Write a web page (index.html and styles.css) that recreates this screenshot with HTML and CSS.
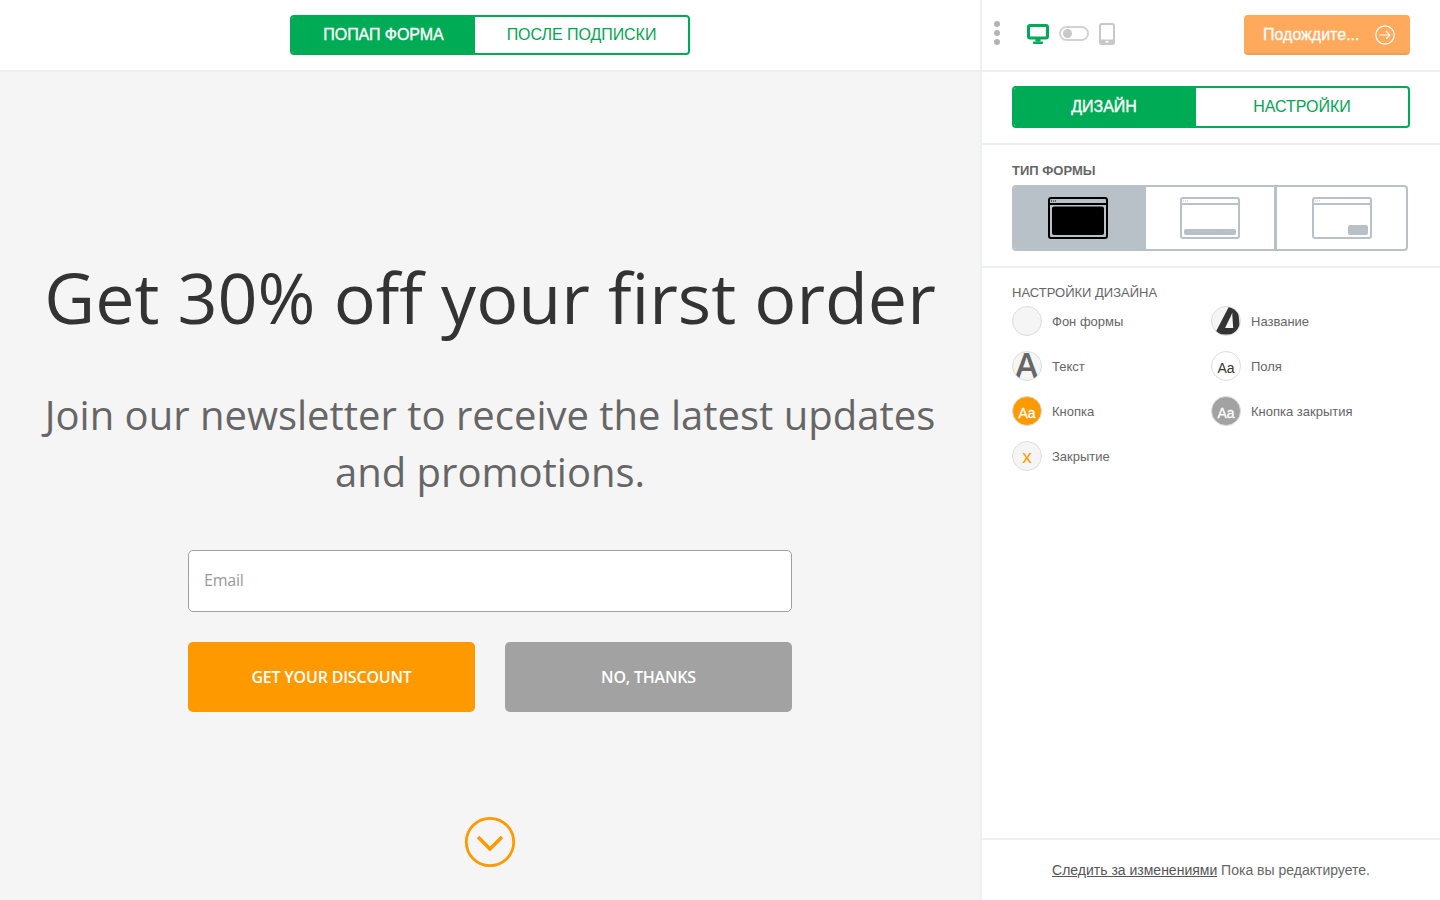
FILE: index.html
```html
<!DOCTYPE html>
<html lang="ru">
<head>
<meta charset="utf-8">
<title>Редактор формы</title>
<link rel="stylesheet" href="styles.css">
</head>
<body>
<div class="app">
  <main class="main">
    <header class="topbar">
      <div class="seg seg-top">
        <span class="seg-item seg-on seg-top-a">ПОПАП ФОРМА</span>
        <span class="seg-item seg-top-b">ПОСЛЕ ПОДПИСКИ</span>
      </div>
    </header>
    <section class="canvas">
      <h1 class="headline">Get 30% off your first order</h1>
      <p class="subline">Join our newsletter to receive the latest updates and promotions.</p>
      <div class="email">Email</div>
      <div class="actions">
        <div class="cta cta-go">GET YOUR DISCOUNT</div>
        <div class="cta cta-no">NO, THANKS</div>
      </div>
      <svg class="down" width="52" height="52" viewBox="0 0 52 52" aria-hidden="true">
        <circle cx="26" cy="26" r="23.700" fill="none" stroke="#ff9900" stroke-width="2.8"/>
        <path d="M14 21 26 33 38 21" fill="none" stroke="#ff9900" stroke-width="3.6"/>
      </svg>
    </section>
  </main>
  <aside class="side">
    <div class="side-top">
      <div class="dots"><i></i><i></i><i></i></div>
      <svg class="ico-desk" width="22" height="20" viewBox="0 0 22 20" aria-hidden="true">
        <rect x="1.500" y="1.500" width="19" height="12.500" rx="1.500" fill="none" stroke="#00ab55" stroke-width="3"/>
        <rect x="8.500" y="14" width="5" height="3.500" fill="#00ab55"/>
        <rect x="6" y="17.500" width="10" height="2.500" rx="1" fill="#00ab55"/>
      </svg>
      <div class="toggle"><i></i></div>
      <svg class="ico-tab" width="16" height="22" viewBox="0 0 16 22" aria-hidden="true">
        <rect x="1" y="1" width="14" height="20" rx="2" fill="none" stroke="#c8c8c8" stroke-width="2"/>
        <rect x="1" y="16.500" width="14" height="4.500" fill="#c8c8c8"/>
        <rect x="6.500" y="18" width="3" height="1.600" fill="#fff"/>
      </svg>
      <div class="wait">
        <span>Подождите...</span>
        <svg width="20" height="20" viewBox="0 0 20 20" aria-hidden="true">
          <circle cx="10" cy="10" r="9.200" fill="none" stroke="#fff" stroke-width="1.200"/>
          <path d="M4.500 10H15M11 6l4 4-4 4" fill="none" stroke="#fff" stroke-width="1.100"/>
        </svg>
      </div>
    </div>
    <div class="side-tabs">
      <div class="seg seg-side">
        <span class="seg-item seg-on seg-side-a">ДИЗАЙН</span>
        <span class="seg-item seg-side-b">НАСТРОЙКИ</span>
      </div>
    </div>
    <div class="side-type">
      <div class="type-title">ТИП ФОРМЫ</div>
      <div class="types">
        <div class="type type-on">
          <svg width="60" height="42" viewBox="0 0 60 42" aria-hidden="true">
            <rect x="1" y="1" width="58" height="40" rx="2" fill="none" stroke="#000" stroke-width="2"/>
            <rect x="1" y="6" width="58" height="2" fill="#000"/>
            <rect x="3" y="3.500" width="1" height="1" fill="#000"/><rect x="5" y="3.500" width="1" height="1" fill="#000"/><rect x="7" y="3.500" width="1" height="1" fill="#000"/>
            <rect x="4" y="9.500" width="52" height="28.500" rx="2" fill="#000"/>
          </svg>
        </div>
        <div class="type type-mid">
          <svg width="60" height="42" viewBox="0 0 60 42" aria-hidden="true">
            <rect x="1" y="1" width="58" height="40" rx="2" fill="none" stroke="#b9c1c8" stroke-width="2"/>
            <rect x="1" y="6" width="58" height="2" fill="#b9c1c8"/>
            <rect x="3" y="3.500" width="1" height="1" fill="#b9c1c8"/><rect x="5" y="3.500" width="1" height="1" fill="#b9c1c8"/><rect x="7" y="3.500" width="1" height="1" fill="#b9c1c8"/>
            <rect x="4" y="32" width="52" height="6" rx="2" fill="#b9c1c8"/>
          </svg>
        </div>
        <div class="type type-last">
          <svg width="60" height="42" viewBox="0 0 60 42" aria-hidden="true">
            <rect x="1" y="1" width="58" height="40" rx="2" fill="none" stroke="#b9c1c8" stroke-width="2"/>
            <rect x="1" y="6" width="58" height="2" fill="#b9c1c8"/>
            <rect x="3" y="3.500" width="1" height="1" fill="#b9c1c8"/><rect x="5" y="3.500" width="1" height="1" fill="#b9c1c8"/><rect x="7" y="3.500" width="1" height="1" fill="#b9c1c8"/>
            <rect x="36" y="28" width="20" height="10" rx="2" fill="#b9c1c8"/>
          </svg>
        </div>
      </div>
    </div>
    <div class="side-design">
      <div class="design-title">НАСТРОЙКИ ДИЗАЙНА</div>
      <div class="swatches">
        <div class="sw"><span class="dot dot-bg"></span><span>Фон формы</span></div>
        <div class="sw"><span class="dot dot-bg"><b class="big big-title">A</b></span><span>Название</span></div>
        <div class="sw"><span class="dot dot-bg"><b class="big big-text">A</b></span><span>Текст</span></div>
        <div class="sw"><span class="dot dot-field">Aa</span><span>Поля</span></div>
        <div class="sw"><span class="dot dot-btn">Aa</span><span>Кнопка</span></div>
        <div class="sw"><span class="dot dot-close">Aa</span><span>Кнопка закрытия</span></div>
        <div class="sw"><span class="dot dot-bg dot-x">x</span><span>Закрытие</span></div>
      </div>
    </div>
    <footer class="side-foot"><a class="foot-link">Следить за изменениями</a> Пока вы редактируете.</footer>
  </aside>
</div>
</body>
</html>
```

FILE: styles.css
```css
* { box-sizing: border-box; }
html, body { margin: 0; padding: 0; height: 100%; overflow: hidden; background: #fff; }
body { font-family: "Liberation Sans", Arial, sans-serif; color: #666; }
.app { display: flex; width: 1440px; height: 900px; }

.main { width: 982px; height: 900px; border-right: 2px solid #eceff3; display: flex; flex-direction: column; flex: none; }
.topbar { height: 72px; flex: none; border-bottom: 2px solid #eceff3; display: flex; justify-content: center; padding-top: 15px; }
.seg { display: flex; border: 2px solid #00ab55; border-radius: 4px; overflow: hidden; background: #fff; }
.seg-item { display: flex; align-items: center; justify-content: center; color: #00a651; font-size: 16px; letter-spacing: -0.05px; }
.seg-on { background: #00ab55; color: #fff; -webkit-text-stroke: 0.35px #fff; }
.seg-top { width: 400px; height: 40px; }
.seg-top-a { width: 183px; }
.seg-top-b { flex: 1; }
.seg-side { width: 398px; height: 42px; }
.seg-side-a { width: 182px; padding-right: 2px; }
.seg-side-b { flex: 1; }

.canvas { flex: 1; background: #f5f5f5; display: flex; flex-direction: column; align-items: center; }
.headline { margin: 183px 0 0; font: 400 70px/85px "Open Sans", sans-serif; color: #333; white-space: nowrap; }
.subline { margin: 46px 0 0; width: 960px; text-align: center; font: 400 40px/57px "Open Sans", sans-serif; color: #666; }
.email { margin-top: 50px; width: 604px; height: 62px; background: #fff; border: 1px solid #a0a0a0; border-radius: 5px; padding: 0 0 2px 15px; display: flex; align-items: center; font: 400 16px "Open Sans", sans-serif; color: #999; letter-spacing: -0.2px; }
.actions { margin-top: 30px; display: flex; gap: 30px; }
.cta { width: 287px; height: 70px; border-radius: 5px; display: flex; align-items: center; justify-content: center; color: #fff; font: 600 16px "Open Sans", sans-serif; letter-spacing: -0.2px; }
.cta-go { background: #ff9900; }
.cta-no { background: #a2a2a2; }
.down { margin-top: 104px; }

.side { flex: 1; display: flex; flex-direction: column; height: 900px; }
.side-top { height: 72px; flex: none; border-bottom: 2px solid #eceff3; display: flex; align-items: flex-start; padding: 0 30px 0 12px; }
.dots { display: flex; flex-direction: column; gap: 3px; margin-top: 21px; }
.dots i { width: 6px; height: 6px; border-radius: 50%; background: #b4b4b4; display: block; }
.ico-desk { margin: 24px 0 0 27px; }
.toggle { width: 30px; height: 15px; border: 2px solid #d2d2d2; border-radius: 8px; margin: 26px 0 0 10px; padding: 1px 0 0 2px; }
.toggle i { display: block; width: 9px; height: 9px; border-radius: 50%; background: #c8c8c8; }
.ico-tab { margin: 23px 0 0 10px; }
.wait { margin: 15px 0 0 auto; width: 166px; height: 40px; background: #ffa95c; border-bottom: 2px solid #eea050; border-radius: 4px; color: #fff; font-size: 16px; -webkit-text-stroke: 0.3px #fff; display: flex; align-items: center; padding: 1px 15px 0 19px; justify-content: space-between; }

.side-tabs { height: 73px; flex: none; border-bottom: 2px solid #eceff3; padding: 14px 30px 0; }
.side-type { height: 123px; flex: none; border-bottom: 2px solid #eceff3; padding: 18px 30px 0; }
.type-title { font-size: 13px; font-weight: 700; color: #666; line-height: 15px; }
.types { margin-top: 7px; width: 396px; height: 66px; border: 2px solid #b9c1c8; border-radius: 4px; display: flex; overflow: hidden; }
.type { display: flex; align-items: center; justify-content: center; flex: 1; }
.type-on { background: #b9c1c8; flex: none; width: 132px; padding-right: 4px; }
.type-mid { border-right: 3px solid #b9c1c8; flex: none; width: 131px; }
.type-last { padding-left: 1px; }

.side-design { flex: 1; padding: 17px 30px 0; }
.design-title { font-size: 13px; color: #666; line-height: 16px; }
.swatches { margin-top: 5px; display: grid; grid-template-columns: 199px 1fr; row-gap: 15px; }
.sw { display: flex; align-items: center; gap: 10px; font-size: 13px; color: #666; height: 30px; }
.dot { width: 30px; height: 30px; border-radius: 50%; border: 1px solid #dcdcdc; overflow: hidden; flex: none; display: flex; align-items: center; justify-content: center; position: relative; font-size: 14px; padding-top: 3px; }
.dot-bg { background: #f5f5f5; }
.dot-field { background: #fff; color: #333; }
.dot-btn { background: #ff9900; color: #fff; -webkit-text-stroke: 0.3px #fff; }
.dot-close { background: #a2a2a2; color: #fff; -webkit-text-stroke: 0.3px #fff; }
.dot-x { color: #ff9900; font-size: 19px; padding-top: 0; line-height: 1; }
.big { position: absolute; font-family: "Open Sans", sans-serif; line-height: 1; }
.big-text { font-size: 35px; color: #666; left: 2px; top: -5px; font-weight: 600; }
.big-title { font-size: 50px; color: #333; left: 1px; top: -8px; font-weight: 700; font-style: italic; }

.side-foot { height: 62px; flex: none; border-top: 2px solid #eceff3; text-align: center; font-size: 14px; line-height: 60px; color: #666; }
.foot-link { text-decoration: underline; color: #555; }
```
